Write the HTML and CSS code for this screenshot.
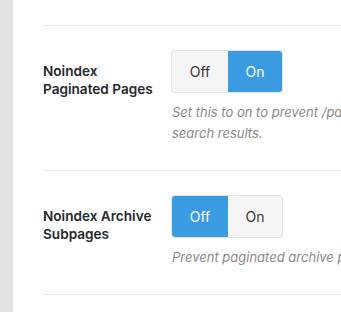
FILE: index.html
```html
<!DOCTYPE html>
<html lang="en">
<head>
    <meta charset="UTF-8">
    <meta name="viewport" content="width=device-width, initial-scale=1">
    <title>SEO Settings</title>
    <link rel="stylesheet" href="styles.css">
</head>
<body>
<div class="page">
    <div class="sidebar"></div>
    <div class="panel">
        <div class="setting">
            <div class="label">Noindex Paginated Pages</div>
            <div class="control">
                <div class="toggle">
                    <button class="seg seg-off">Off</button>
                    <button class="seg seg-on active">On</button>
                </div>
                <p class="desc">Set this to on to prevent /page/2/ URLs from appearing in search results.</p>
            </div>
        </div>
        <div class="setting">
            <div class="label">Noindex Archive Subpages</div>
            <div class="control">
                <div class="toggle">
                    <button class="seg seg-off active">Off</button>
                    <button class="seg seg-on">On</button>
                </div>
                <p class="desc">Prevent paginated archive pages from getting indexed.</p>
            </div>
        </div>
    </div>
</div>
</body>
</html>
```

FILE: styles.css
```css
html, body {
    margin: 0;
    padding: 0;
    height: 100%;
    overflow: hidden;
    background: #fff;
}
body {
    font-family: Inter, "Open Sans", "Liberation Sans", sans-serif;
    color: #23282d;
}
.page {
    display: flex;
    min-height: 100%;
}
.sidebar {
    flex: 0 0 13px;
    background: #e4e4e4;
}
.panel {
    flex: 0 0 700px;
    padding-top: 25px;
    padding-left: 30px;
}
.setting {
    display: flex;
    border-top: 1px solid #e8e8e8;
    padding: 25px 0 26px;
}
.setting:last-child {
    border-bottom: 1px solid #e8e8e8;
}
.label {
    flex: 0 0 129px;
    box-sizing: border-box;
    padding: 11px 10px 0 0;
    font-size: 13.6px;
    font-weight: 600;
    line-height: 18px;
}
.control {
    flex: 0 0 365px;
}
.toggle {
    display: inline-flex;
    height: 41px;
    border-radius: 3px;
    box-shadow: 0 0 0 1px #e3e3e3, 0 1px 2px rgba(0, 0, 0, 0.08);
    overflow: hidden;
}
.seg {
    border: none;
    margin: 0;
    padding: 0;
    background: #f5f5f5;
    color: #333;
    font-family: inherit;
    font-size: 14px;
    cursor: pointer;
}
.seg-off { width: 56px; }
.seg-on { width: 54px; }
.seg.active {
    background: #3a9be1;
    color: #fff;
}
.desc {
    margin: 10px 0 0;
    font-size: 13px;
    font-style: italic;
    line-height: 21px;
    color: #888;
}
```
